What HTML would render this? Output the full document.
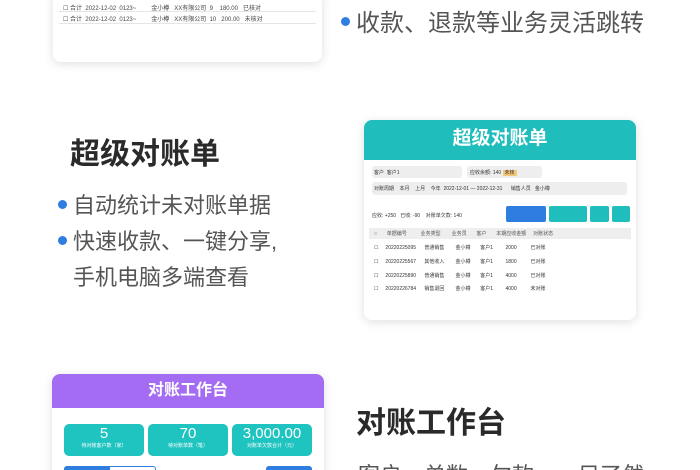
<!DOCTYPE html>
<html><head><meta charset="utf-8"><style>
*{margin:0;padding:0;box-sizing:border-box}
html,body{width:700px;height:470px;overflow:hidden}
body{background:#fff;position:relative;font-family:"Liberation Sans","Noto Sans CJK SC",sans-serif;}
.a{position:absolute}
.card{position:absolute;background:#fff;border-radius:8px;box-shadow:0 2px 10px rgba(0,0,0,.13);overflow:hidden}
.dot{position:absolute;width:9px;height:9px;border-radius:50%;background:#2f7de1}
.t{position:absolute;color:#555;font-size:22px;white-space:nowrap}
.h{position:absolute;color:#2a2a2a;font-size:30px;font-weight:bold;white-space:nowrap}
.sm{font-size:5px;color:#333;white-space:nowrap;position:absolute}
</style></head><body>
<div class="card" style="left:53px;top:-10px;width:269px;height:72px">
 <div class="sm" style="left:10px;top:13px;font-size:6px;color:#444">☐ 合计 &nbsp;2022-12-02 &nbsp;0123~ &nbsp;&nbsp;&nbsp;&nbsp;&nbsp;&nbsp;&nbsp;&nbsp;金小樽 &nbsp;&nbsp;XX有限公司 &nbsp;9 &nbsp;&nbsp;&nbsp;180.00 &nbsp;&nbsp;已核对</div>
 <div style="position:absolute;left:6px;right:6px;top:21px;border-top:1px solid #e5e5e5"></div>
 <div class="sm" style="left:10px;top:24px;font-size:6px;color:#444">☐ 合计 &nbsp;2022-12-02 &nbsp;0123~ &nbsp;&nbsp;&nbsp;&nbsp;&nbsp;&nbsp;&nbsp;&nbsp;金小樽 &nbsp;&nbsp;XX有限公司 &nbsp;10 &nbsp;&nbsp;200.00 &nbsp;&nbsp;未核对</div>
 <div style="position:absolute;left:6px;right:6px;top:33px;border-top:1px solid #e5e5e5"></div>
</div>
<div class="dot" style="left:341px;top:17px"></div>
<div class="t" style="left:356px;top:3px;font-size:24px">收款、退款等业务灵活跳转</div>

<div class="h" style="left:70px;top:129px">超级对账单</div>
<div class="dot" style="left:58px;top:200px"></div>
<div class="t" style="left:73px;top:188px">自动统计未对账单据</div>
<div class="dot" style="left:58px;top:236px"></div>
<div class="t" style="left:73px;top:224px">快速收款、一键分享,</div>
<div class="t" style="left:73px;top:260px">手机电脑多端查看</div>

<div class="card" style="left:364px;top:120px;width:272px;height:200px;border-radius:8px">
 <div style="height:40px;background:#1fbdbb;color:#fff;font-size:19px;font-weight:bold;text-align:center;line-height:38px">超级对账单</div>
 <div class="a" style="left:8px;top:46px;width:90px;height:12px;background:#eee;border-radius:3px"></div>
 <div class="sm" style="left:10px;top:49px">客户 &nbsp;客户1</div>
 <div class="a" style="left:103px;top:46px;width:75px;height:12px;background:#eee;border-radius:3px"></div>
 <div class="sm" style="left:106px;top:49px">应收余额: 140 <span style="background:#f5c97a;padding:0 2px">未核</span></div>
 <div class="a" style="left:8px;top:62px;width:255px;height:13px;background:#eee;border-radius:3px"></div>
 <div class="sm" style="left:10px;top:65px">对账周期 &nbsp;&nbsp;&nbsp;本月 &nbsp;&nbsp;&nbsp;上月 &nbsp;&nbsp;&nbsp;今年 &nbsp;2022-12-01 — 2022-12-31 &nbsp;&nbsp;&nbsp;&nbsp;&nbsp;销售人员 &nbsp;&nbsp;金小樽</div>
 <div class="sm" style="left:8px;top:92px">应收: +250 &nbsp;&nbsp;已收: -90 &nbsp;&nbsp;&nbsp;对账单欠款: 140</div>
 <div class="a" style="left:142px;top:86px;width:40px;height:16px;background:#2f7de1;border-radius:2px"></div>
 <div class="a" style="left:185px;top:86px;width:38px;height:16px;background:#1fbdbb;border-radius:2px"></div>
 <div class="a" style="left:226px;top:86px;width:19px;height:16px;background:#1fbdbb;border-radius:2px"></div>
 <div class="a" style="left:248px;top:86px;width:18px;height:16px;background:#1fbdbb;border-radius:2px"></div>
 <div class="a" style="left:5px;top:108px;width:262px;height:11px;background:#eee"></div>
 <div class="sm" style="left:10px;top:110px;color:#555">○ &nbsp;&nbsp;&nbsp;&nbsp;&nbsp;&nbsp;单据编号 &nbsp;&nbsp;&nbsp;&nbsp;&nbsp;&nbsp;&nbsp;&nbsp;&nbsp;业务类型 &nbsp;&nbsp;&nbsp;&nbsp;&nbsp;&nbsp;&nbsp;业务员 &nbsp;&nbsp;&nbsp;&nbsp;&nbsp;&nbsp;客户 &nbsp;&nbsp;&nbsp;&nbsp;&nbsp;&nbsp;本期应收金额 &nbsp;&nbsp;&nbsp;&nbsp;对账状态</div>
 <div class="sm" style="left:10px;top:124px">☐ &nbsp;&nbsp;&nbsp;&nbsp;20220225095 &nbsp;&nbsp;&nbsp;&nbsp;&nbsp;普通销售 &nbsp;&nbsp;&nbsp;&nbsp;&nbsp;&nbsp;&nbsp;金小樽 &nbsp;&nbsp;&nbsp;&nbsp;&nbsp;&nbsp;客户1 &nbsp;&nbsp;&nbsp;&nbsp;&nbsp;&nbsp;&nbsp;&nbsp;2000 &nbsp;&nbsp;&nbsp;&nbsp;&nbsp;&nbsp;&nbsp;&nbsp;&nbsp;已对账</div>
 <div class="sm" style="left:10px;top:138px">☐ &nbsp;&nbsp;&nbsp;&nbsp;20220225567 &nbsp;&nbsp;&nbsp;&nbsp;&nbsp;其他收入 &nbsp;&nbsp;&nbsp;&nbsp;&nbsp;&nbsp;&nbsp;金小樽 &nbsp;&nbsp;&nbsp;&nbsp;&nbsp;&nbsp;客户1 &nbsp;&nbsp;&nbsp;&nbsp;&nbsp;&nbsp;&nbsp;&nbsp;1800 &nbsp;&nbsp;&nbsp;&nbsp;&nbsp;&nbsp;&nbsp;&nbsp;&nbsp;已对账</div>
 <div class="sm" style="left:10px;top:152px">☐ &nbsp;&nbsp;&nbsp;&nbsp;20220225890 &nbsp;&nbsp;&nbsp;&nbsp;&nbsp;普通销售 &nbsp;&nbsp;&nbsp;&nbsp;&nbsp;&nbsp;&nbsp;金小樽 &nbsp;&nbsp;&nbsp;&nbsp;&nbsp;&nbsp;客户1 &nbsp;&nbsp;&nbsp;&nbsp;&nbsp;&nbsp;&nbsp;&nbsp;4000 &nbsp;&nbsp;&nbsp;&nbsp;&nbsp;&nbsp;&nbsp;&nbsp;&nbsp;已对账</div>
 <div class="sm" style="left:10px;top:165px">☐ &nbsp;&nbsp;&nbsp;&nbsp;20220226784 &nbsp;&nbsp;&nbsp;&nbsp;&nbsp;销售退回 &nbsp;&nbsp;&nbsp;&nbsp;&nbsp;&nbsp;&nbsp;金小樽 &nbsp;&nbsp;&nbsp;&nbsp;&nbsp;&nbsp;客户1 &nbsp;&nbsp;&nbsp;&nbsp;&nbsp;&nbsp;&nbsp;&nbsp;4000 &nbsp;&nbsp;&nbsp;&nbsp;&nbsp;&nbsp;&nbsp;&nbsp;&nbsp;未对账</div>
</div>

<div class="card" style="left:52px;top:374px;width:272px;height:110px">
 <div style="height:34px;background:#a46cf2;color:#fff;font-size:16px;font-weight:bold;text-align:center;line-height:34px">对账工作台</div>
 <div class="a" style="left:12px;top:50px;width:80px;height:32px;background:#1fc3bf;border-radius:5px;color:#fff;text-align:center;font-size:15px;line-height:16px;padding-top:2px">5<div style="font-size:5px;line-height:8px">待对账客户数（家）</div></div>
 <div class="a" style="left:96px;top:50px;width:80px;height:32px;background:#1fc3bf;border-radius:5px;color:#fff;text-align:center;font-size:15px;line-height:16px;padding-top:2px">70<div style="font-size:5px;line-height:8px">待对账单数（笔）</div></div>
 <div class="a" style="left:180px;top:50px;width:80px;height:32px;background:#1fc3bf;border-radius:5px;color:#fff;text-align:center;font-size:15px;line-height:16px;padding-top:2px">3,000.00<div style="font-size:5px;line-height:8px">对账单欠款合计（元）</div></div>
 <div class="a" style="left:12px;top:92px;width:92px;height:12px;border:1px solid #2f7de1;border-radius:3px;background:linear-gradient(90deg,#2f7de1 50%,#fff 50%)"></div>
 <div class="a" style="left:214px;top:92px;width:46px;height:12px;background:#2f7de1;border-radius:3px"></div>
</div>

<div class="h" style="left:356px;top:398px">对账工作台</div>
<div class="dot" style="left:343px;top:470px"></div>
<div class="t" style="left:358px;top:458px">客户、单数、欠款、一目了然</div>
</body></html>
